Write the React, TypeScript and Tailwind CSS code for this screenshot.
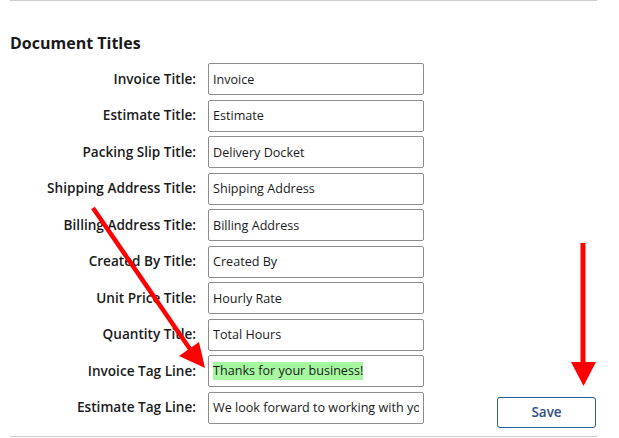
const rows: { label: string; value: string; highlight?: boolean }[] = [
  { label: 'Invoice Title:', value: 'Invoice' },
  { label: 'Estimate Title:', value: 'Estimate' },
  { label: 'Packing Slip Title:', value: 'Delivery Docket' },
  { label: 'Shipping Address Title:', value: 'Shipping Address' },
  { label: 'Billing Address Title:', value: 'Billing Address' },
  { label: 'Created By Title:', value: 'Created By' },
  { label: 'Unit Price Title:', value: 'Hourly Rate' },
  { label: 'Quantity Title:', value: 'Total Hours' },
  { label: 'Invoice Tag Line:', value: 'Thanks for your business!', highlight: true },
  { label: 'Estimate Tag Line:', value: 'We look forward to working with you' },
];

function Field({ value, highlight }: { value: string; highlight?: boolean }) {
  if (highlight) {
    return (
      <div className="w-[216px] h-[32px] shrink-0 border border-[#8c8c8c] rounded-[2px] px-[4px] flex items-center overflow-hidden whitespace-nowrap text-[12.6px] text-[#1a1a1a]">
        <span className="bg-[#a5f7a0] leading-[18px]">{value}</span>
      </div>
    );
  }
  return (
    <input
      readOnly
      value={value}
      className="w-[216px] h-[32px] shrink-0 border border-[#8c8c8c] rounded-[2px] px-[4px] text-[12.6px] text-[#1a1a1a] outline-none bg-white"
    />
  );
}

export default function App() {
  return (
    <div className="relative w-[619px] h-[438px] bg-white overflow-hidden font-['Open_Sans',sans-serif]">
      <div className="ml-[10px] w-[587px] border-t border-[#cccccc] border-b pb-[8px]">
        {/* Heading */}
        <h2 className="pt-[31px] text-[16px] leading-[22px] font-bold text-[#1a1a1a]">Document Titles</h2>

        {/* Rows */}
        <div className="mt-[9px] flex flex-col gap-[4.5px]">
          {rows.map((r, i) => (
            <div key={r.label} className="flex items-start">
              <div className="w-[186px] h-[32px] flex items-center justify-end text-[13.6px] font-semibold text-[#1a1a1a] whitespace-nowrap">
                {r.label}
              </div>
              <div className="ml-[12px]">
                <Field value={r.value} highlight={r.highlight} />
              </div>
              {i === rows.length - 1 && (
                <button className="ml-auto mr-[1px] mt-[5px] w-[99px] h-[31px] border border-[#2f5b9e] rounded-[3px] text-[13.5px] font-semibold text-[#2d4f86] bg-white">
                  Save
                </button>
              )}
            </div>
          ))}
        </div>
      </div>

      {/* Annotation arrows */}
      <svg className="absolute inset-0 pointer-events-none" width="619" height="438" viewBox="0 0 619 438">
        <line x1="93" y1="208" x2="192" y2="352" stroke="#ff0000" strokeWidth="4.5" />
        <polygon points="205,368 179,356 199,342" fill="#ff0000" />
        <line x1="583" y1="243" x2="583" y2="364" stroke="#ff0000" strokeWidth="5" />
        <polygon points="571,362 596,362 583.5,386" fill="#ff0000" />
      </svg>
    </div>
  );
}
